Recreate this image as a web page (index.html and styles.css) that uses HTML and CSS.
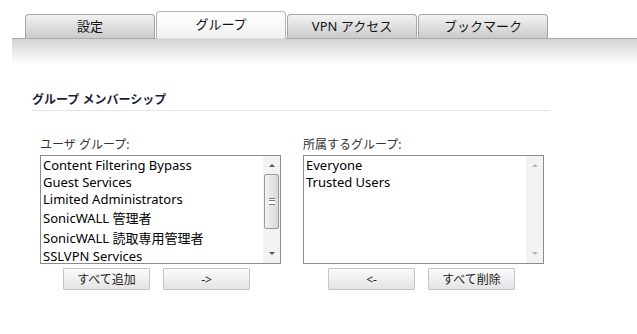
FILE: index.html
```html
<!DOCTYPE html>
<html lang="ja">
<head>
    <meta charset="UTF-8">
    <meta name="viewport" content="width=device-width, initial-scale=1.0">
    <title>グループ</title>
    <link rel="stylesheet" href="styles.css">
</head>
<body>
    <div class="tabs">
        <div class="tab">設定</div>
        <div class="tab active">グループ</div>
        <div class="tab">VPN アクセス</div>
        <div class="tab">ブックマーク</div>
    </div>
    <div class="band"></div>

    <div class="section">
        <h2 class="sectionTitle">グループ メンバーシップ</h2>

        <div class="columns">
            <div class="column">
                <div class="listLabel">ユーザ グループ:</div>
                <div class="listBox">
                    <div class="items">
                        <div class="item">Content Filtering Bypass</div>
                        <div class="item">Guest Services</div>
                        <div class="item">Limited Administrators</div>
                        <div class="item wide">SonicWALL 管理者</div>
                        <div class="item wide">SonicWALL 読取専用管理者</div>
                        <div class="item">SSLVPN Services</div>
                    </div>
                    <div class="scrollBar">
                        <span class="arrowUp"></span>
                        <div class="thumb"><span class="grip"></span></div>
                        <span class="arrowDown"></span>
                    </div>
                </div>
                <div class="buttons leftButtons">
                    <button type="button">すべて追加</button>
                    <button type="button">-&gt;</button>
                </div>
            </div>

            <div class="column">
                <div class="listLabel">所属するグループ:</div>
                <div class="listBox">
                    <div class="items">
                        <div class="item">Everyone</div>
                        <div class="item">Trusted Users</div>
                    </div>
                    <div class="scrollBar disabled">
                        <span class="arrowUp"></span>
                        <span class="arrowDown"></span>
                    </div>
                </div>
                <div class="buttons rightButtons">
                    <button type="button">&lt;-</button>
                    <button type="button">すべて削除</button>
                </div>
            </div>
        </div>
    </div>
</body>
</html>
```

FILE: styles.css
```css
body {
    margin: 0;
    padding: 0;
    background: #fff;
    font-family: 'Noto Sans', 'Noto Sans CJK JP', sans-serif;
    color: #000;
}

.tabs {
    display: flex;
    align-items: flex-end;
    gap: 1px;
    padding: 11px 0 0 25px;
}

.tab {
    width: 128px;
    height: 23px;
    line-height: 23px;
    border: 1px solid #a4a4a4;
    border-bottom: none;
    border-radius: 4px 4px 0 0;
    background: linear-gradient(#f3f3f3, #cacaca);
    text-align: center;
    font-size: 13px;
    color: #111;
}

.tab.active {
    height: 26px;
    line-height: 25px;
    border-color: #b4b4b4;
    border-bottom: 1px solid #dcdcec;
    margin-bottom: -1px;
    background: linear-gradient(#ffffff, #f1f1f1);
    position: relative;
}

.band {
    margin-left: 12px;
    height: 26px;
    border-top: 1px solid #a9a9b8;
    background: linear-gradient(#d3d3d3, #ffffff);
}

.section {
    padding: 27px 0 0 32px;
}

.sectionTitle {
    margin: 0;
    width: 518px;
    height: 16px;
    line-height: 16px;
    padding-bottom: 2px;
    border-bottom: 1px solid #e2e2e2;
    font-size: 12px;
    font-weight: bold;
    color: #1b1b3a;
}

.columns {
    display: flex;
    gap: 22px;
    padding: 26px 0 0 8px;
}

.column {
    width: 241px;
}

.listLabel {
    font-size: 12px;
    color: #333;
    height: 16px;
    line-height: 16px;
}

.listBox {
    display: flex;
    height: 107px;
    border: 1px solid #8c8c8c;
    overflow: hidden;
    margin-top: 2px;
}

.items {
    flex: 1;
    padding: 1px 0 0 2px;
    font-size: 13px;
}

.item {
    line-height: 17px;
    white-space: nowrap;
}

.item.wide {
    line-height: 20px;
}

.scrollBar {
    width: 17px;
    display: flex;
    flex-direction: column;
    align-items: center;
    background: #f3f3f3;
}

.arrowUp,
.arrowDown {
    width: 0;
    height: 0;
    border-left: 3px solid transparent;
    border-right: 3px solid transparent;
}

.arrowUp {
    margin-top: 8px;
    border-bottom: 3px solid #555;
}

.arrowDown {
    margin-top: auto;
    margin-bottom: 8px;
    border-top: 3px solid #555;
}

.disabled .arrowUp {
    border-bottom-color: #b8b8b8;
}

.disabled .arrowDown {
    border-top-color: #b8b8b8;
}

.thumb {
    margin-top: 7px;
    width: 13px;
    height: 53px;
    border: 1px solid #9a9a9a;
    border-radius: 2px;
    background: linear-gradient(to right, #f2f2f2, #d8d8d8);
    display: flex;
    align-items: center;
    justify-content: center;
}

.grip {
    width: 6px;
    height: 5px;
    border-top: 1px solid #777;
    border-bottom: 1px solid #777;
    background: linear-gradient(#fff 0, #fff 1px, #777 1px, #777 2px, #fff 2px);
}

.buttons {
    display: flex;
    gap: 13px;
    margin-top: 4px;
}

.leftButtons {
    padding-left: 23px;
}

.rightButtons {
    padding-left: 25px;
}

button {
    width: 87px;
    height: 22px;
    padding: 0;
    border: 1px solid #c4c4c4;
    border-radius: 1px;
    background: linear-gradient(#fbfbfb, #e4e4e4);
    font-family: 'Noto Sans', 'Noto Sans CJK JP', sans-serif;
    font-size: 12px;
    color: #222;
}
```
